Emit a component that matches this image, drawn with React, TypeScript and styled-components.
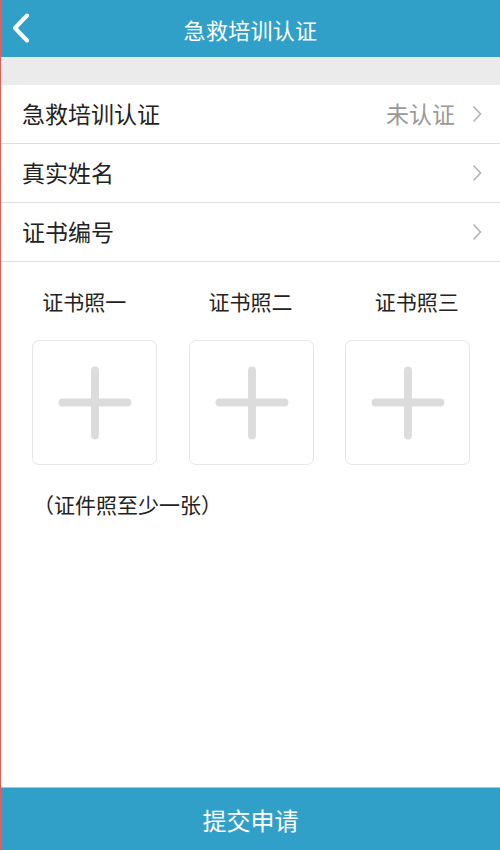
import React from "react";
import styled, { createGlobalStyle } from "styled-components";

const GlobalStyle = createGlobalStyle`
  html, body {
    margin: 0;
    padding: 0;
    background: #fff;
  }
  body {
    font-family: "Noto Sans CJK SC", "Noto Sans", sans-serif;
  }
`;

const Page = styled.div`
  display: flex;
  flex-direction: column;
  height: 100vh;
  border-left: 1px solid #f45656;
  box-sizing: border-box;
  background: #fff;
`;

const Header = styled.header`
  position: relative;
  display: flex;
  align-items: center;
  justify-content: center;
  height: 57px;
  flex-shrink: 0;
  background: #31a0c9;
  color: #fff;
`;

const Title = styled.h1`
  margin: 0;
  font-size: 22px;
  font-weight: 400;
  letter-spacing: 0.3px;
`;

const BackButton = styled.button`
  position: absolute;
  left: 6px;
  top: 10px;
  width: 28px;
  height: 36px;
  padding: 0;
  border: none;
  background: none;
  display: flex;
  align-items: center;
  justify-content: center;
`;

const Band = styled.div`
  height: 28px;
  flex-shrink: 0;
  background: #ebebeb;
`;

const List = styled.div`
  display: flex;
  flex-direction: column;
`;

const Row = styled.div`
  display: flex;
  align-items: center;
  height: 58px;
  padding: 0 18px 0 21px;
  border-bottom: 1px solid #dedede;
  font-size: 23px;
  color: #222;
`;

const RowLabel = styled.span`
  flex: 1;
  padding-bottom: 2px;
`;

const RowValue = styled.span`
  color: #999;
  margin-right: 17px;
  padding-bottom: 2px;
`;

const Photos = styled.section`
  display: flex;
  flex-direction: column;
  padding-top: 24px;
  flex: 1;
`;

const LabelRow = styled.div`
  display: grid;
  grid-template-columns: repeat(3, 1fr);
  font-size: 21px;
  color: #222;
  text-align: center;
`;

const BoxRow = styled.div`
  display: grid;
  grid-template-columns: repeat(3, 125px);
  column-gap: 31.5px;
  padding-left: 31px;
  margin-top: 24px;
`;

const UploadBox = styled.div`
  width: 125px;
  height: 125px;
  box-sizing: border-box;
  border: 1px solid #e6e6e6;
  border-radius: 7px;
  display: flex;
  align-items: center;
  justify-content: center;
`;

const Note = styled.p`
  margin: 24px 0 0 32px;
  font-size: 21px;
  color: #222;
`;

const Submit = styled.button`
  height: 63px;
  flex-shrink: 0;
  border: none;
  border-top: 1px solid #8fcbe2;
  background: #31a0c9;
  color: #fff;
  font-family: inherit;
  font-size: 24px;
`;

const Chevron = () => (
  <svg width="10" height="18" viewBox="0 0 10 18">
    <polyline points="1.5,1.5 8.5,9 1.5,16.5" fill="none" stroke="#b3b3b3" strokeWidth="1.6" />
  </svg>
);

const Plus = () => (
  <svg width="125" height="125" viewBox="0 0 125 125">
    <g stroke="#dcdcdc" strokeWidth="8" strokeLinecap="round">
      <line x1="30" y1="62.5" x2="96" y2="62.5" />
      <line x1="63" y1="30" x2="63" y2="96" />
    </g>
  </svg>
);

const rows = [
  { label: "急救培训认证", value: "未认证" },
  { label: "真实姓名" },
  { label: "证书编号" },
];

const photos = ["证书照一", "证书照二", "证书照三"];

export default function App() {
  return (
    <>
      <GlobalStyle />
      <Page>
        <Header>
          <BackButton aria-label="返回">
            <svg width="20" height="30" viewBox="0 0 20 30">
              <polyline points="16,2.5 4,15 16,27.5" fill="none" stroke="#fff" strokeWidth="4" strokeLinecap="round" strokeLinejoin="round" />
            </svg>
          </BackButton>
          <Title>急救培训认证</Title>
        </Header>
        <Band />
        <List>
          {rows.map((r) => (
            <Row key={r.label}>
              <RowLabel>{r.label}</RowLabel>
              {r.value && <RowValue>{r.value}</RowValue>}
              <Chevron />
            </Row>
          ))}
        </List>
        <Photos>
          <LabelRow>
            {photos.map((p) => (
              <span key={p}>{p}</span>
            ))}
          </LabelRow>
          <BoxRow>
            {photos.map((p) => (
              <UploadBox key={p}>
                <Plus />
              </UploadBox>
            ))}
          </BoxRow>
          <Note>（证件照至少一张）</Note>
        </Photos>
        <Submit>提交申请</Submit>
      </Page>
    </>
  );
}
